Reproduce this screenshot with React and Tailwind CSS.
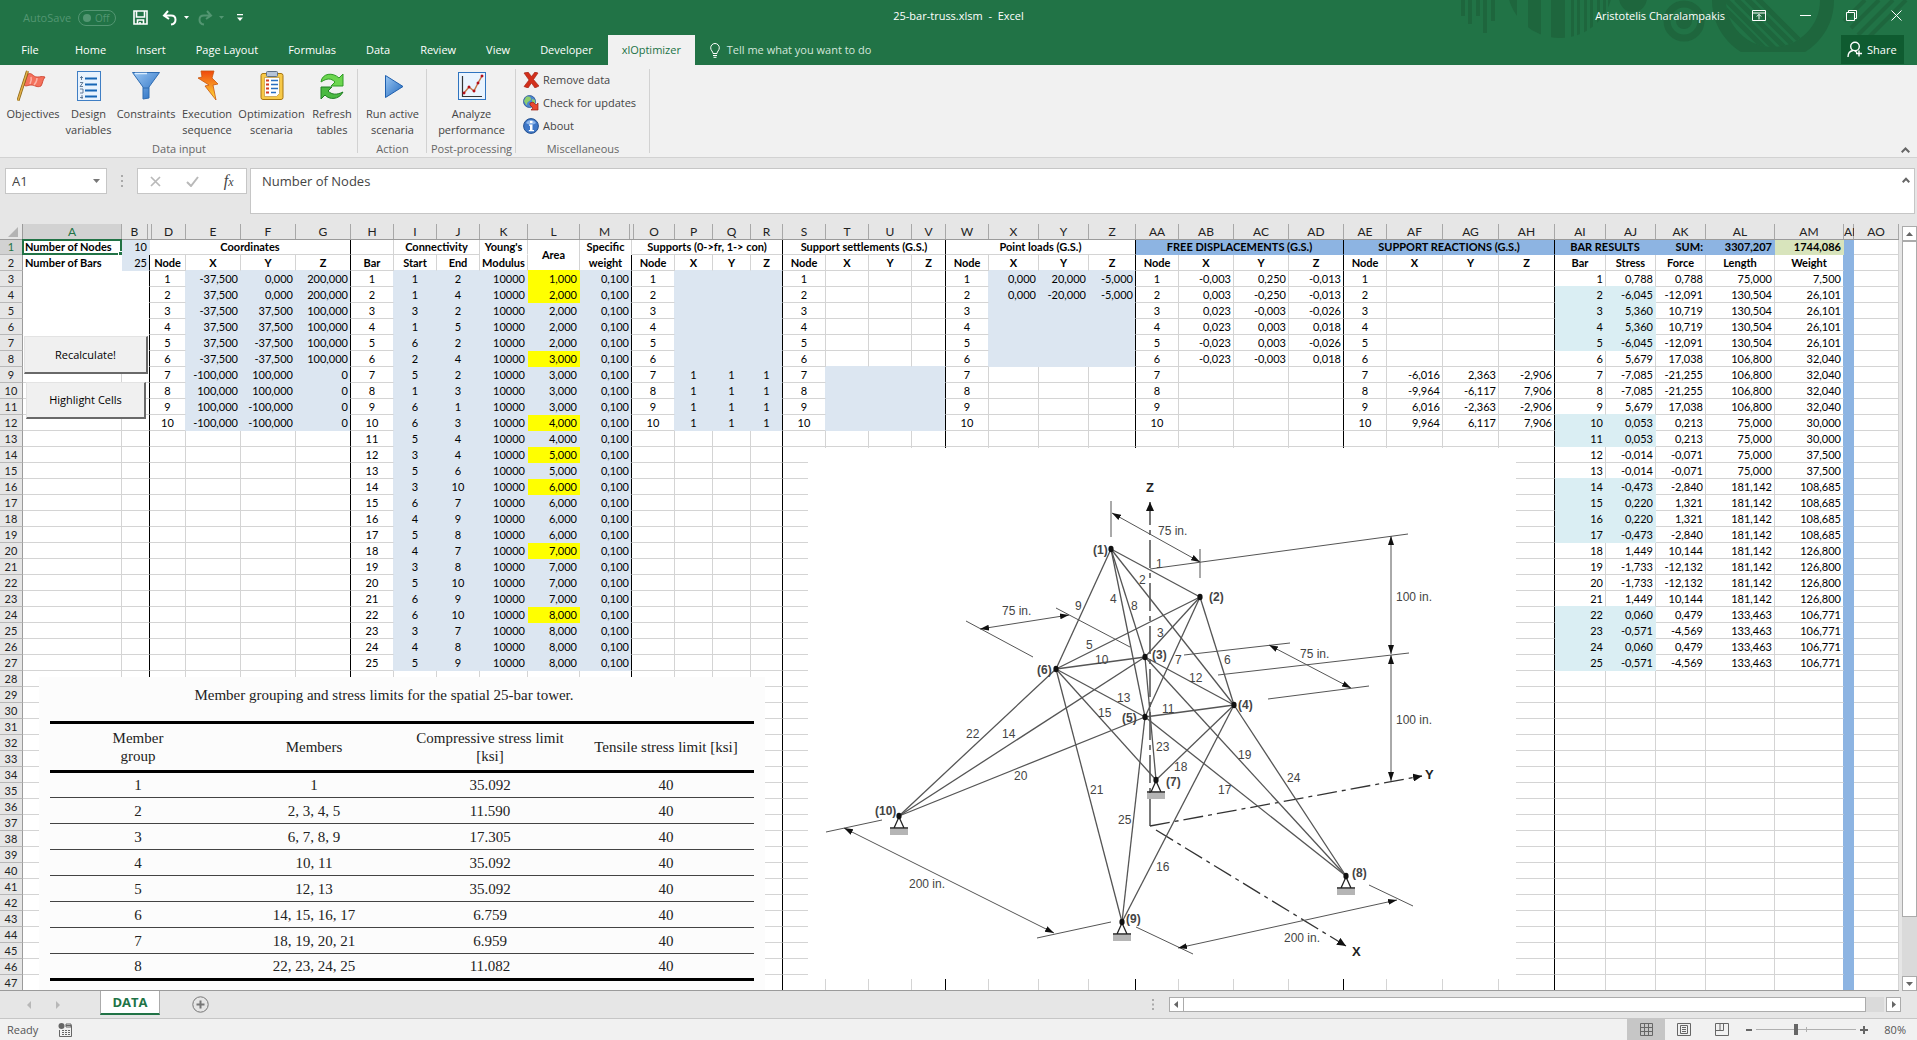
import React from 'react'

const COLS = [
    ['A', 99], ['B', 28], ['D', 36], ['E', 55], ['F', 55], ['G', 55],
    ['H', 43], ['I', 43], ['J', 43], ['K', 48], ['L', 52], ['M', 52],
    ['O', 43], ['P', 38], ['Q', 38], ['R', 32],
    ['S', 43], ['T', 43], ['U', 43], ['V', 34],
    ['W', 43], ['X', 50], ['Y', 50], ['Z', 47],
    ['AA', 43], ['AB', 55], ['AC', 55], ['AD', 55],
    ['AE', 43], ['AF', 56], ['AG', 56], ['AH', 56],
    ['AI', 51], ['AJ', 50], ['AK', 50], ['AL', 69], ['AM', 69], ['AN', 10], ['AO', null],
]
const NAMES = COLS.map((c) => c[0])
const THICK = ['B', 'G', 'M', 'R', 'V', 'Z', 'AD', 'AH']

const nodes = [
    ['-37,500', '0,000', '200,000'], ['37,500', '0,000', '200,000'], ['-37,500', '37,500', '100,000'],
    ['37,500', '37,500', '100,000'], ['37,500', '-37,500', '100,000'], ['-37,500', '-37,500', '100,000'],
    ['-100,000', '100,000', '0'], ['100,000', '100,000', '0'], ['100,000', '-100,000', '0'], ['-100,000', '-100,000', '0'],
]

const displacements = [
    ['-0,003', '0,250', '-0,013'], ['0,003', '-0,250', '-0,013'], ['0,023', '-0,003', '-0,026'],
    ['0,023', '0,003', '0,018'], ['-0,023', '0,003', '-0,026'], ['-0,023', '-0,003', '0,018'],
]

const reactions = [
    ['-6,016', '2,363', '-2,906'], ['-9,964', '-6,117', '7,906'], ['6,016', '-2,363', '-2,906'], ['9,964', '6,117', '7,906'],
]

const links = [
    [1, 2], [1, 4], [3, 2], [1, 5], [6, 2], [2, 4], [5, 2], [1, 3], [6, 1], [6, 3], [5, 4], [3, 4], [5, 6],
    [3, 10], [6, 7], [4, 9], [5, 8], [4, 7], [3, 8], [5, 10], [6, 9], [6, 10], [3, 7], [4, 8], [5, 9],
]

// area group of every bar, 1 to 8
const groups = [1, 2, 2, 2, 2, 3, 3, 3, 3, 4, 4, 5, 5, 6, 6, 6, 6, 7, 7, 7, 7, 8, 8, 8, 8]

const results = [
    ['0,788', '0,788', '75,000', '7,500'],
    ['-6,045', '-12,091', '130,504', '26,101'],
    ['5,360', '10,719', '130,504', '26,101'],
    ['5,360', '10,719', '130,504', '26,101'],
    ['-6,045', '-12,091', '130,504', '26,101'],
    ['5,679', '17,038', '106,800', '32,040'],
    ['-7,085', '-21,255', '106,800', '32,040'],
    ['-7,085', '-21,255', '106,800', '32,040'],
    ['5,679', '17,038', '106,800', '32,040'],
    ['0,053', '0,213', '75,000', '30,000'],
    ['0,053', '0,213', '75,000', '30,000'],
    ['-0,014', '-0,071', '75,000', '37,500'],
    ['-0,014', '-0,071', '75,000', '37,500'],
    ['-0,473', '-2,840', '181,142', '108,685'],
    ['0,220', '1,321', '181,142', '108,685'],
    ['0,220', '1,321', '181,142', '108,685'],
    ['-0,473', '-2,840', '181,142', '108,685'],
    ['1,449', '10,144', '181,142', '126,800'],
    ['-1,733', '-12,132', '181,142', '126,800'],
    ['-1,733', '-12,132', '181,142', '126,800'],
    ['1,449', '10,144', '181,142', '126,800'],
    ['0,060', '0,479', '133,463', '106,771'],
    ['-0,571', '-4,569', '133,463', '106,771'],
    ['0,060', '0,479', '133,463', '106,771'],
    ['-0,571', '-4,569', '133,463', '106,771'],
]

const cells = {}
const put = (col, row, value, align = 'right', bold = false, span = 1, rowSpan = 1) => {
    cells[col + row] = { value, align, bold, span, rowSpan }
}

put('A', 1, 'Number of Nodes', 'left', true)
put('A', 2, 'Number of Bars', 'left', true)
put('B', 1, '10')
put('B', 2, '25')
put('D', 1, 'Coordinates', 'center', true, 4)
put('I', 1, 'Connectivity', 'center', true, 2)
put('K', 1, "Young's", 'center', true)
put('L', 1, 'Area', 'center', true, 1, 2)
put('M', 1, 'Specific', 'center', true)
put('O', 1, 'Supports (0->fr, 1-> con)', 'center', true, 4)
put('S', 1, 'Support settlements (G.S.)', 'center', true, 4)
put('W', 1, 'Point loads (G.S.)', 'center', true, 4)
put('AA', 1, 'FREE DISPLACEMENTS (G.S.)', 'center', true, 4)
put('AE', 1, 'SUPPORT REACTIONS (G.S.)', 'center', true, 4)
put('AI', 1, 'BAR RESULTS', 'center', true, 2)
put('AK', 1, 'SUM:', 'right', true)
put('AL', 1, '3307,207', 'right', true)
put('AM', 1, '1744,086', 'right', true)

const heads = {
    D: 'Node', E: 'X', F: 'Y', G: 'Z', H: 'Bar', I: 'Start', J: 'End', K: 'Modulus', M: 'weight',
    O: 'Node', P: 'X', Q: 'Y', R: 'Z', S: 'Node', T: 'X', U: 'Y', V: 'Z', W: 'Node', X: 'X', Y: 'Y', Z: 'Z',
    AA: 'Node', AB: 'X', AC: 'Y', AD: 'Z', AE: 'Node', AF: 'X', AG: 'Y', AH: 'Z',
    AI: 'Bar', AJ: 'Stress', AK: 'Force', AL: 'Length', AM: 'Weight',
}
Object.keys(heads).forEach((col) => put(col, 2, heads[col], 'center', true))

const putRow = (names, row, values, align) => names.forEach((col, i) => put(col, row, values[i], align))

nodes.forEach((xyz, i) => {
    const row = i + 3
    putRow(['D', 'O', 'S', 'W', 'AA', 'AE'], row, Array(6).fill(i + 1), 'center')
    putRow(['E', 'F', 'G'], row, xyz)
    if (i >= 6) putRow(['P', 'Q', 'R'], row, [1, 1, 1], 'center')
})
putRow(['X', 'Y', 'Z'], 3, ['0,000', '20,000', '-5,000'])
putRow(['X', 'Y', 'Z'], 4, ['0,000', '-20,000', '-5,000'])
displacements.forEach((d, i) => putRow(['AB', 'AC', 'AD'], i + 3, d))
reactions.forEach((r, i) => putRow(['AF', 'AG', 'AH'], i + 9, r))
links.forEach((link, i) => {
    put('H', i + 3, i + 1, 'center')
    putRow(['I', 'J'], i + 3, link, 'center')
    putRow(['K', 'L', 'M'], i + 3, ['10000', `${groups[i]},000`, '0,100'])
    putRow(['AI', 'AJ', 'AK', 'AL', 'AM'], i + 3, [i + 1, ...results[i]])
})

const fillOf = (col, row) => {
    const idx = NAMES.indexOf(col)
    const within = (a, b) => idx >= NAMES.indexOf(a) && idx <= NAMES.indexOf(b)
    if (col === 'AN') return 'header'
    if (row === 1) {
        if (col === 'B') return 'input'
        if (col === 'AM') return 'green'
        return within('AA', 'AL') ? 'header' : null
    }
    if (row === 2) return col === 'B' ? 'input' : col === 'A' ? 'white' : null
    if (within('A', 'B')) return row <= 8 ? 'white' : null
    if (within('E', 'G') && row <= 12) return 'input'
    if (within('I', 'M') && row <= 27) {
        const first = row === 3 || groups[row - 3] !== groups[row - 4]
        return col === 'L' && first ? 'yellow' : 'input'
    }
    if (within('P', 'R') && row <= 12) return 'input'
    if (within('T', 'V') && row >= 9 && row <= 12) return 'input'
    if (within('X', 'Z') && row <= 8) return 'input'
    if (within('AI', 'AJ') && row <= 27 && groups[row - 3] % 2 === 0) return 'cyan'
    return null
}

const bg = {
    header: 'bg-[#8db4e2]', input: 'bg-[#dce6f1]', green: 'bg-[#d8e4bc]',
    yellow: 'bg-[#ffff00]', cyan: 'bg-[#daeef3]', white: 'bg-white',
}
const right = {
    header: 'border-r-[#8db4e2]', input: 'border-r-[#dce6f1]', green: 'border-r-[#d8e4bc]',
    yellow: 'border-r-[#ffff00]', cyan: 'border-r-[#daeef3]', white: 'border-r-white',
    grid: 'border-r-[#d4d4d4]', thick: 'border-r-black',
}
const bottom = {
    header: 'border-b-[#8db4e2]', input: 'border-b-[#dce6f1]', green: 'border-b-[#d8e4bc]',
    yellow: 'border-b-[#ffff00]', cyan: 'border-b-[#daeef3]', white: 'border-b-white',
    grid: 'border-b-[#d4d4d4]',
}
const aligns = { left: 'text-left', right: 'text-right', center: 'text-center' }

const Cell = ({ col, row }) => {
    const cell = cells[col + row] || { span: 1, rowSpan: 1, align: 'left' }
    const idx = NAMES.indexOf(col)
    const last = NAMES[idx + cell.span - 1]
    const next = NAMES[idx + cell.span]
    const fill = fillOf(col, row)
    const thick = THICK.includes(last) && !(row === 1 && (last === 'B' || last === 'M'))
    const rightKey = thick ? 'thick' : fill || (next && fillOf(next, row)) || 'grid'
    const noLine = row === 1 && (col === 'K' || col === 'M')
    const bottomKey = noLine ? 'white' : fill || fillOf(col, row + cell.rowSpan) || 'grid'
    const selected = col === 'A' && row === 1

    return (
        <td
            colSpan={cell.span}
            rowSpan={cell.rowSpan}
            className={`relative px-[2px] py-0 border-r border-b whitespace-nowrap
            ${aligns[cell.align]} ${cell.bold ? 'font-bold' : ''} ${fill ? bg[fill] : 'bg-white'} ${right[rightKey]} ${bottom[bottomKey]}`}
        >
            {cell.value}
            {selected && (
                <span className="absolute -inset-px border-2 border-[#217346]">
                    <span className="absolute -right-1 -bottom-1 size-[6px] border-t border-l border-white bg-[#217346]" />
                </span>
            )}
        </td>
    )
}

const Grid = () => {
    const rows = Array.from({ length: 47 }, (_, i) => i + 1)
    const renderRow = (row) => {
        const items = []
        for (let i = 0; i < NAMES.length; i++) {
            // the merged Area cell covers both heading rows
            if (row === 2 && NAMES[i] === 'L') continue
            items.push(<Cell key={NAMES[i]} col={NAMES[i]} row={row} />)
            const cell = cells[NAMES[i] + row]
            if (cell) i += cell.span - 1
        }
        return items
    }

    return (
        <table className="w-full table-fixed border-separate border-spacing-0 font-['Lato',sans-serif] text-[11px] leading-[14px] text-black">
            <colgroup>
                <col className="w-[23px]" />
                {COLS.map(([name, width]) => (
                    <col key={name} style={width ? { width } : undefined} />
                ))}
            </colgroup>
            <thead>
                <tr className="h-4 bg-[#e6e6e6]">
                    <th className="p-0 border-r border-b border-[#9b9b9b]">
                        <svg className="ml-auto mr-1" width="10" height="10" viewBox="0 0 10 10"><path d="M10 0v10H0z" fill="#b4b4b4" /></svg>
                    </th>
                    {NAMES.map((name) => (
                        <th
                            key={name}
                            scope="col"
                            className={`p-0 border-b font-normal text-[12px] whitespace-nowrap overflow-hidden
                            ${name === 'A' ? 'bg-[#d2d2d2] text-[#217346] border-b-[#217346]' : 'border-b-[#9b9b9b] text-[#222]'}`}
                        >
                            <div className={`h-[15px] leading-[15px] border-r border-[#a8a8a8]
                                ${name === 'B' || name === 'M' ? 'mr-[2px]' : ''} ${name === 'D' || name === 'O' ? 'border-l ml-px' : ''}`}>
                                {name}
                            </div>
                        </th>
                    ))}
                </tr>
            </thead>
            <tbody>
                {rows.map((row) => (
                    <tr key={row} className={row === 1 ? 'h-[15px]' : 'h-4'}>
                        <th
                            scope="row"
                            className={`p-0 border-r border-b border-r-[#9b9b9b] border-b-[#b8b8b8] font-normal text-center
                            ${row === 1 ? 'bg-[#d2d2d2] text-[#217346]' : 'bg-[#e6e6e6] text-[#222]'}`}
                        >
                            {row}
                        </th>
                        {renderRow(row)}
                    </tr>
                ))}
            </tbody>
        </table>
    )
}

const limits = [
    ['1', '1', '35.092', '40'], ['2', '2, 3, 4, 5', '11.590', '40'], ['3', '6, 7, 8, 9', '17.305', '40'],
    ['4', '10, 11', '35.092', '40'], ['5', '12, 13', '35.092', '40'], ['6', '14, 15, 16, 17', '6.759', '40'],
    ['7', '18, 19, 20, 21', '6.959', '40'], ['8', '22, 23, 24, 25', '11.082', '40'],
]

const LimitsTable = () => (
    <div className="absolute left-[39px] top-[453px] w-[726px] h-[320px] bg-[#fcfcfc] px-[11px] pt-2 font-['Liberation_Serif',serif] text-[15px] leading-[18px] text-[#222]">
        <table className="w-full table-fixed border-collapse text-center">
            <caption className="pr-9 pt-px pb-[17px]">Member grouping and stress limits for the spatial 25-bar tower.</caption>
            <thead>
                <tr className="h-[49px] border-y-[3px] border-black">
                    <th className="px-[56px] font-normal">Member group</th>
                    <th className="font-normal">Members</th>
                    <th className="font-normal">Compressive stress limit [ksi]</th>
                    <th className="font-normal whitespace-nowrap">Tensile stress limit [ksi]</th>
                </tr>
            </thead>
            <tbody>
                {limits.map((line) => (
                    <tr key={line[0]} className="h-[26px] border-b border-[#444] last:border-b-[3px] last:border-black">
                        {line.map((value, i) => <td key={i} className="p-0">{value}</td>)}
                    </tr>
                ))}
            </tbody>
        </table>
    </div>
)

const P = {
    1: [1111, 549], 2: [1200, 597], 3: [1145, 657], 4: [1234, 705], 5: [1145, 717],
    6: [1056, 669], 7: [1156, 780], 8: [1346, 876], 9: [1122, 922], 10: [899, 816],
}

const extensions = [
    [1111, 501, 1111, 537], [1200, 549, 1200, 578], [1150, 569, 1408, 534], [1218, 675, 1409, 653],
    [1184, 655, 1290, 643], [1268, 699, 1369, 686], [966, 621, 1033, 657], [1056, 608, 1130, 647],
    [826, 832, 882, 820], [1037, 938, 1111, 922], [1136, 927, 1193, 954], [1369, 885, 1413, 906],
]

const dimensions = [
    [1112, 513, 1200, 562], [1391, 536, 1391, 654], [1391, 655, 1391, 781], [1269, 645, 1351, 688],
    [980, 629, 1069, 615], [844, 828, 1054, 933], [1178, 948, 1397, 900],
]

const barLabels = [
    [1156, 568, '1'], [1139, 584, '2'], [1157, 637, '3'], [1110, 603, '4'], [1086, 649, '5'], [1224, 664, '6'],
    [1175, 664, '7'], [1131, 610, '8'], [1075, 610, '9'], [1095, 664, '10'], [1162, 713, '11'], [1189, 682, '12'],
    [1117, 702, '13'], [1002, 738, '14'], [1098, 717, '15'], [1156, 871, '16'], [1218, 794, '17'], [1174, 771, '18'],
    [1238, 759, '19'], [1014, 780, '20'], [1090, 794, '21'], [966, 738, '22'], [1156, 751, '23'], [1287, 782, '24'],
    [1118, 824, '25'], [1158, 535, '75 in.'], [1002, 615, '75 in.'], [1300, 658, '75 in.'], [1396, 601, '100 in.'],
    [1396, 724, '100 in.'], [909, 888, '200 in.'], [1284, 942, '200 in.'],
]

const nodeLabels = [
    [1093, 554, '(1)'], [1209, 601, '(2)'], [1152, 659, '(3)'], [1238, 709, '(4)'], [1122, 722, '(5)'],
    [1037, 674, '(6)'], [1166, 786, '(7)'], [1352, 877, '(8)'], [1126, 923, '(9)'], [875, 815, '(10)'],
]

const TrussDrawing = () => (
    <svg
        className="absolute left-[808px] top-[224px] bg-white font-['Liberation_Sans',sans-serif]"
        width="708" height="531" viewBox="808 448 708 531" fill="none" stroke="#555" role="img" aria-label="25-bar truss"
    >
        <defs>
            <marker id="tip" markerUnits="userSpaceOnUse" markerWidth="10" markerHeight="8" refX="9" refY="4" orient="auto-start-reverse">
                <path d="M0 1 9 4 0 7z" fill="#111" stroke="none" />
            </marker>
            <marker id="axis" markerUnits="userSpaceOnUse" markerWidth="10" markerHeight="8" refX="9" refY="4" orient="auto">
                <path d="M0 0 9 4 0 8z" fill="#111" stroke="none" />
            </marker>
        </defs>
        <g stroke="#333" strokeWidth="1.3">
            <path d="M1150 826V502" strokeDasharray="28 5 5 5" markerEnd="url(#axis)" />
            <path d="M1150 826 1422 776" strokeDasharray="20 5 4 5" markerEnd="url(#axis)" />
            <path d="M1156 830 1346 946" strokeDasharray="20 5 4 5" markerEnd="url(#axis)" />
        </g>
        {links.map(([a, b], i) => (
            <line key={i} x1={P[a][0]} y1={P[a][1]} x2={P[b][0]} y2={P[b][1]} strokeWidth="1.3" />
        ))}
        {extensions.map(([x1, y1, x2, y2], i) => <line key={i} x1={x1} y1={y1} x2={x2} y2={y2} />)}
        {dimensions.map(([x1, y1, x2, y2], i) => (
            <line key={i} x1={x1} y1={y1} x2={x2} y2={y2} markerStart="url(#tip)" markerEnd="url(#tip)" />
        ))}
        {[7, 8, 9, 10].map((n) => (
            <g key={n}>
                <rect x={P[n][0] - 9} y={P[n][1] + 13} width="18" height="6" fill="#b5b5b5" stroke="none" />
                <path d={`M${P[n][0] - 5} ${P[n][1] + 12}l5 -11 5 11M${P[n][0] - 9} ${P[n][1] + 12}h18`} stroke="#222" strokeWidth="1.3" />
            </g>
        ))}
        {Object.keys(P).map((n) => <ellipse key={n} cx={P[n][0]} cy={P[n][1]} rx="2.600" ry="3.200" fill="#111" stroke="none" />)}
        <g fill="#444" stroke="none" fontSize="12">
            {barLabels.map(([x, y, text]) => <text key={x + text + y} x={x} y={y}>{text}</text>)}
            <g fontWeight="bold">
                {nodeLabels.map(([x, y, text]) => <text key={text} x={x} y={y}>{text}</text>)}
                <text x="1146" y="492" fontSize="13" fill="#222">Z</text>
                <text x="1425" y="779" fontSize="13" fill="#222">Y</text>
                <text x="1352" y="956" fontSize="13" fill="#222">X</text>
            </g>
        </g>
    </svg>
)

const icons = {
    flag: (
        <>
            <path d="M11 4c4-2 5 3 9 3s4-1 8 0c-3 4-2 6-4 9-4 2-6-1-10-1-3 0-5 2-7 0z" fill="#f4715c" stroke="#c93a25" strokeWidth=".8" />
            <path d="M14 7c1 3 0 5-1 7M20 8c0 3-1 5-3 7" stroke="#fbb3a6" fill="none" strokeWidth="1.5" />
            <path d="M10.500 1 1 30.500" stroke="#8a6413" strokeWidth="3" />
            <path d="M10.500 1 1 30.500" stroke="#e2b04a" strokeWidth="1.500" />
        </>
    ),
    list: (
        <>
            <rect x="4.500" y="1.500" width="23" height="29" fill="#e9f3fd" stroke="#3f7ec4" />
            <path d="M12 8.500h12M12 14.500h12M12 20.500h12M12 26.500h12" stroke="#1766b5" strokeWidth="2" />
            <path d="M7 7.500h3M8.500 6v4M7 12.500h3l-3 4h3M7 19h3v4H7M9 25v4M7 27.500h3" stroke="#56708f" strokeWidth=".9" fill="none" />
        </>
    ),
    funnel: (
        <>
            <path d="M2.500 2.500h27L19 17v11l-6 1V17z" fill="url(#blue)" stroke="#2f6cb2" />
            <path d="M13 18h6" stroke="#2f6cb2" />
            <path d="M5 3.500h12" stroke="#d9ecff" strokeWidth="1.500" />
        </>
    ),
    bolt: <path d="M10 1h13l-2 7 6 6-5 1 3 15L14 16l4-1L7 8l4-1z" fill="url(#fire)" stroke="#c8560d" strokeWidth=".8" />,
    clipboard: (
        <>
            <rect x="5" y="3.500" width="22" height="26" rx="2" fill="#f7c948" stroke="#a8760f" />
            <path d="M8.500 7.500h15v16l-3 3h-12z" fill="#fff" stroke="#b58a2e" strokeWidth=".6" />
            <rect x="10.500" y="1.500" width="11" height="5" rx="1" fill="#b6c4d8" stroke="#5f7085" />
            <path d="M10 10.500h3M10 14.500h3M10 18.500h3M10 22.500h3" stroke="#d63a22" strokeWidth="2.200" />
            <path d="M15 10.500h7M15 14.500h7M15 18.500h7M15 22.500h5" stroke="#2a6fc0" strokeWidth="1.500" />
        </>
    ),
    refresh: (
        <>
            <path d="M5 12C6 3 17 2 23 8l4-4v12H15l4-4c-4-4-8-4-14 0z" fill="#6cd64f" stroke="#2f9a26" />
            <path d="M27 22c-4 8-14 8-18 3l-4 4V17h11l-4 4c4 4 9 4 15 1z" fill="#4ab942" stroke="#1f7f22" />
        </>
    ),
    play: <path d="M8.500 5.500 26 16.500 8.500 27.500z" fill="url(#blue)" stroke="#1e5fae" />,
    chart: (
        <>
            <rect x="2.500" y="2.500" width="27" height="27" fill="#eaf4fe" stroke="#2f74c0" />
            <path d="M6.500 6v20.500H26" stroke="#333" strokeWidth="1.200" fill="none" />
            <path d="m8 23 5-6 5 4 4-8 4-7" stroke="#c5774b" strokeWidth="1.500" fill="none" />
            <path d="M7 22h2v2H7zM12 16h2v2h-2zM17 20h2v2h-2zM21 12h2v2h-2zM25 5h2v2h-2z" fill="#b5121b" stroke="#b5121b" strokeWidth=".6" />
        </>
    ),
    cross: <path d="m1 1 4-1 3.500 4.500L12 0l3 1-4.500 6.500L16 14l-4 2-3.500-5L5 16l-4-1.500L6 8z" fill="#d3301c" stroke="#9c1b0d" strokeWidth=".6" />,
    globe: (
        <>
            <circle cx="6.500" cy="6.500" r="6" fill="#4d86cf" stroke="#264f8f" strokeWidth=".8" />
            <path d="M3 2c3-1 5 0 5 2S4 6 4 9 2 8 1 6zM9 4l3 1v4l-3 1z" fill="#8fce6d" />
            <path d="m7 8 3-1 3 3 2-2v7H8l2-2-3-3z" fill="#e8482f" stroke="#9c1b0d" strokeWidth=".7" />
        </>
    ),
    info: (
        <>
            <circle cx="8" cy="8" r="7.400" fill="#3f78c8" stroke="#24508f" />
            <path d="M3 5c2-4 8-4 10 0-3 2-7 2-10 0z" fill="#8fb7ea" />
            <path d="M7 3h2.500v2H7zM6 6.500h3.500V12H11v1.200H5.800V12H7V7.700H6z" fill="#fff" />
        </>
    ),
}

const BigButton = ({ icon, lines, width }) => (
    <button className={`flex flex-col items-center gap-1 leading-4 text-center ${width}`}>
        <svg width="32" height="32" viewBox="0 0 32 32" fill="none">{icons[icon]}</svg>
        <span className="flex flex-col whitespace-nowrap">
            {lines.map((line) => <span key={line}>{line}</span>)}
        </span>
    </button>
)

const SmallButton = ({ icon, text }) => (
    <button className="flex items-center gap-1 h-[23px]">
        <svg width="16" height="16" viewBox="0 0 16 16">{icons[icon]}</svg>
        {text}
    </button>
)

const Group = ({ label, className, children }) => (
    <section className={`relative flex flex-col h-[92px] pt-[5px] ${className}`}>
        <div className="flex grow">{children}</div>
        <div className="h-4 leading-4 text-center whitespace-nowrap text-[#666]">{label}</div>
        <span className="absolute right-0 top-1 bottom-1 w-px bg-[#d2d2d2]" />
    </section>
)

const TitleBar = () => (
    <header className="relative flex items-center h-[35px] text-white">
        <svg className="absolute right-0 top-0" width="517" height="65" viewBox="0 0 517 65" fill="#1e663d">
            <defs>
                <clipPath id="dome"><circle cx="160" cy="-15" r="53" /></clipPath>
                <clipPath id="lens"><circle cx="373" cy="0" r="47" /></clipPath>
                <clipPath id="base"><path d="M0 0h517v52H0z" /></clipPath>
            </defs>
            <path d="M61 0h4v16h-4zM68 0h4v24h-4zM76 0h4v16h-4zM83 0h4v33h-4zM91 0h4v21h-4z" />
            <g clipPath="url(#dome)">
                <path d="M107 0h10v40h-10zM128 0h13v40h-13zM151 0h14v40h-14zM171 0h3v40h-3zM177 0h3v40h-3zM184 0h3v40h-3zM190 0h3v40h-3zM197 0h3v40h-3zM203 0h3v40h-3zM208 0h3v40h-3z" />
            </g>
            <circle cx="233" cy="-2" r="14" />
            <circle cx="284" cy="21" r="17" fill="none" stroke="#1e663d" strokeWidth="7" />
            <circle cx="284" cy="21" r="8" />
            <g clipPath="url(#base)"><circle cx="373" cy="0" r="54" fill="none" stroke="#1e663d" strokeWidth="14" /></g>
            <g clipPath="url(#lens)" stroke="#1e663d" strokeWidth="5">
                <path d="m316 0 60 60M326 0l60 60M336-1l60 60M346-2l60 60M356-3l60 60" />
            </g>
            <path d="M444 21 465 0M451 28l28-28M458 35l35-35M466 40l40-40" stroke="#1e663d" strokeWidth="4" />
        </svg>
        <div className="relative flex flex-1 items-center pl-[15px]">
            <label className="flex items-center gap-[7px] ml-2 text-[#539672]">
                AutoSave
                <span className="flex items-center gap-1 w-[38px] h-4 pl-1 border border-[#539672] rounded-full text-[10px]">
                    <input type="checkbox" className="appearance-none size-2 rounded-full bg-[#539672]" />
                    Off
                </span>
            </label>
            <button aria-label="Save" className="ml-[17px]">
                <svg width="15" height="15" viewBox="0 0 15 15" fill="none" stroke="#fff" strokeWidth="1.600"><path d="M1 1h13v13H1zM3.500 1v6h8V1M4.500 14v-4h6v4M7 12v2" /></svg>
            </button>
            <button aria-label="Undo" className="flex items-center gap-[6px] ml-[14px]">
                <svg width="16" height="16" viewBox="0 0 16 16" fill="none" stroke="#fff" strokeWidth="2"><path d="M6 1 2 5.500 7 9M2 5.500h7c6 0 6 8 0 9" /></svg>
                <svg width="5" height="3" viewBox="0 0 5 3" fill="#fff"><path d="M0 0h5L2.500 3z" /></svg>
            </button>
            <button aria-label="Redo" className="flex items-center gap-[6px] ml-2">
                <svg width="16" height="16" viewBox="0 0 16 16" fill="none" stroke="#539672" strokeWidth="2"><path d="m10 1 4 4.500L9 9M14 5.500H7c-6 0-6 8 0 9" /></svg>
                <svg width="5" height="3" viewBox="0 0 5 3" fill="#539672"><path d="M0 0h5L2.500 3z" /></svg>
            </button>
            <button aria-label="Customize Quick Access Toolbar" className="ml-[13px]">
                <svg width="6" height="7" viewBox="0 0 6 7" fill="#fff"><path d="M0 0h6v1.300H0zM0 3.500h6L3 7z" /></svg>
            </button>
        </div>
        <h1 className="relative whitespace-pre pb-[3px]">25-bar-truss.xlsm  -  Excel</h1>
        <div className="relative flex flex-1 items-center justify-end pr-[15px] pb-1">
            <span className="mr-[27px]">Aristotelis Charalampakis</span>
            <button aria-label="Ribbon Display Options" className="mr-[34px]">
                <svg width="14" height="12" viewBox="0 0 14 12" fill="none" stroke="#fff"><path d="M.5.5h13v10H.5zM.5 3h13M7 9.500V4.500M4.800 6.500 7 4.300l2.200 2.200" /></svg>
            </button>
            <button aria-label="Minimize" className="mr-[35px]">
                <svg width="11" height="11" viewBox="0 0 11 11" stroke="#fff"><path d="M0 5.500h11" /></svg>
            </button>
            <button aria-label="Restore" className="mr-[34px]">
                <svg width="11" height="11" viewBox="0 0 11 11" fill="none" stroke="#fff"><path d="M.5 2.500h8v8h-8zM2.500 2.500v-2h8v8h-2" /></svg>
            </button>
            <button aria-label="Close">
                <svg width="11" height="11" viewBox="0 0 11 11" stroke="#fff"><path d="m.5.5 10 10M10.500.5l-10 10" /></svg>
            </button>
        </div>
    </header>
)

const tabs = ['Home', 'Insert', 'Page Layout', 'Formulas', 'Data', 'Review', 'View', 'Developer']

const Tabs = () => (
    <nav className="relative flex h-[30px] text-white">
        <button className="w-[60px]">File</button>
        {tabs.map((tab) => <button key={tab} className="px-[15px] whitespace-nowrap">{tab}</button>)}
        <button className="w-[87px] bg-[#f1f1f1] text-[#217346]">xlOptimizer</button>
        <button className="flex items-center gap-[7px] ml-[15px] text-[#d3e6db]">
            <svg width="10" height="15" viewBox="0 0 10 15" fill="none" stroke="#fff"><path d="M3 10.500C3 8.500.7 7.500.7 4.800a4.300 4.300 0 0 1 8.600 0C9.300 7.500 7 8.500 7 10.500zM3 12.500h4M3.500 14.300h3" /></svg>
            Tell me what you want to do
        </button>
        <button className="flex items-center gap-1 w-[63px] h-[29px] ml-auto mr-[13px] pl-[6px] bg-[#0f5b30]">
            <svg width="16" height="17" viewBox="0 0 16 17" fill="none" stroke="#fff" strokeWidth="1.400"><circle cx="8" cy="5.500" r="4.300" /><path d="M1 16c0-4 2-6 5-6.500M8 10l2 1.500M12 9.500v6M9 12.500h6" /></svg>
            Share
        </button>
    </nav>
)

const Ribbon = () => (
    <div className="relative flex bg-[#f1f1f1] border-b border-[#d2d2d2] text-[#444]">
        <svg width="0" height="0" className="absolute">
            <defs>
                <linearGradient id="blue" x2="1" y2="1"><stop stopColor="#9cc8f4" /><stop offset="1" stopColor="#1f67bd" /></linearGradient>
                <linearGradient id="fire" x2="0" y2="1"><stop stopColor="#f0480c" /><stop offset="1" stopColor="#ffdf3a" /></linearGradient>
            </defs>
        </svg>
        <Group label="Data input" className="pl-[2px] pr-[2px]">
            <BigButton icon="flag" width="w-[62px]" lines={['Objectives']} />
            <BigButton icon="list" width="w-[49px]" lines={['Design', 'variables']} />
            <BigButton icon="funnel" width="w-[66px]" lines={['Constraints']} />
            <BigButton icon="bolt" width="w-[56px]" lines={['Execution', 'sequence']} />
            <BigButton icon="clipboard" width="w-[73px]" lines={['Optimization', 'scenaria']} />
            <BigButton icon="refresh" width="w-[48px]" lines={['Refresh', 'tables']} />
        </Group>
        <Group label="Action" className="w-[69px]">
            <BigButton icon="play" width="w-full" lines={['Run active', 'scenaria']} />
        </Group>
        <Group label="Post-processing" className="w-[89px]">
            <BigButton icon="chart" width="w-full" lines={['Analyze', 'performance']} />
        </Group>
        <Group label="Miscellaneous" className="w-[134px]">
            <div className="flex flex-col pl-[7px] -mt-[2px]">
                <SmallButton icon="cross" text="Remove data" />
                <SmallButton icon="globe" text="Check for updates" />
                <SmallButton icon="info" text="About" />
            </div>
        </Group>
        <button aria-label="Collapse the Ribbon" className="self-end ml-auto mr-[7px] mb-[4px]">
            <svg width="9" height="6" viewBox="0 0 9 6" fill="none" stroke="#666" strokeWidth="2"><path d="M.7 5.300 4.500 1.500l3.800 3.800" /></svg>
        </button>
    </div>
)

const FormulaBar = () => (
    <div className="flex items-start h-[66px] pt-[10px] pl-[5px] pr-[2px] text-[#444]">
        <div className="flex items-center w-[102px] h-[26px] bg-white border border-[#c6c6c6]">
            <input aria-label="Name Box" defaultValue="A1" className="w-full min-w-0 pl-[6px] text-[13px] outline-none" />
            <button aria-label="Names" className="px-[6px]">
                <svg width="7" height="4" viewBox="0 0 7 4" fill="#777"><path d="M0 0h7L3.500 4z" /></svg>
            </button>
        </div>
        <svg className="mx-[14px] mt-[7px]" width="2" height="12" viewBox="0 0 2 12" fill="#aaa"><path d="M0 0h2v2H0zM0 5h2v2H0zM0 10h2v2H0z" /></svg>
        <div className="flex items-center justify-around w-[110px] h-[26px] bg-white border border-[#c6c6c6]">
            <button aria-label="Cancel">
                <svg width="11" height="11" viewBox="0 0 11 11" stroke="#b9b9b9" strokeWidth="1.700"><path d="m1 1 9 9M10 1l-9 9" /></svg>
            </button>
            <button aria-label="Enter">
                <svg width="13" height="11" viewBox="0 0 13 11" fill="none" stroke="#b9b9b9" strokeWidth="2"><path d="m1 6 4 4 7-9" /></svg>
            </button>
            <button aria-label="Insert Function" className="font-['Liberation_Serif',serif] italic text-[16px] leading-4 text-[#444]">
                f<span className="text-[12px]">x</span>
            </button>
        </div>
        <div className="flex grow h-[46px] ml-[3px] bg-white border border-[#c6c6c6]">
            <textarea aria-label="Formula Bar" defaultValue="Number of Nodes" className="grow pl-[11px] pt-[3px] text-[13px] leading-[18px] resize-none outline-none" />
            <button aria-label="Collapse Formula Bar" className="self-start mt-2 mr-1">
                <svg width="8" height="6" viewBox="0 0 8 6" fill="none" stroke="#666" strokeWidth="2"><path d="M.7 5.200 4 1.700l3.300 3.500" /></svg>
            </button>
        </div>
    </div>
)

const sheetButton = 'absolute bg-[#f0f0f0] border-t border-l border-t-[#e3e3e3] border-l-[#e3e3e3] border-r-2 border-b-2 border-r-[#696969] border-b-[#696969] text-black text-[11px]'
const scrollButton = 'flex items-center justify-center shrink-0 bg-white border border-[#ababab]'

const Sheet = () => (
    <main className="flex flex-1 min-h-0">
        <div className="relative flex-1 min-w-0 overflow-hidden border-b border-[#9b9b9b]">
            <Grid />
            <button className={`${sheetButton} left-[24px] top-[112px] w-[124px] h-[38px]`}>Recalculate!</button>
            <button className={`${sheetButton} left-[26px] top-[158px] w-[120px] h-[37px]`}>Highlight Cells</button>
            <LimitsTable />
            <TrussDrawing />
        </div>
        <div className="flex flex-col w-[18px] pl-[3px] pt-[2px]">
            <button aria-label="Scroll up" className={`${scrollButton} h-[15px]`}>
                <svg width="7" height="4" viewBox="0 0 7 4" fill="#666"><path d="M0 4h7L3.500 0z" /></svg>
            </button>
            <div className="grow bg-[#dadada]">
                <div className="h-[92%] bg-white border border-[#ababab]" />
            </div>
            <button aria-label="Scroll down" className={`${scrollButton} h-[15px]`}>
                <svg width="7" height="4" viewBox="0 0 7 4" fill="#666"><path d="M0 0h7L3.500 4z" /></svg>
            </button>
        </div>
    </main>
)

const SheetTabs = () => (
    <div className="flex h-[27px]">
        <button aria-label="Previous sheet" className="ml-[27px]">
            <svg width="4" height="8" viewBox="0 0 4 8" fill="#b8b8b8"><path d="M4 0v8L0 4z" /></svg>
        </button>
        <button aria-label="Next sheet" className="ml-[25px]">
            <svg width="4" height="8" viewBox="0 0 4 8" fill="#b8b8b8"><path d="M0 0v8l4-4z" /></svg>
        </button>
        <button className="w-[60px] h-[25px] -mt-px ml-10 bg-white border-x border-[#ababab] border-b-2 border-b-[#217346] font-bold text-[13px] leading-5 text-[#217346]">DATA</button>
        <button aria-label="New sheet" className="ml-8">
            <svg width="17" height="17" viewBox="0 0 17 17" fill="none" stroke="#777"><circle cx="8.500" cy="8.500" r="7.700" /><path d="M8.500 4.500v8M4.500 8.500h8" strokeWidth="2" /></svg>
        </button>
        <svg className="ml-auto mr-[15px] mt-[8px]" width="2" height="11" viewBox="0 0 2 11" fill="#aaa"><path d="M0 0h2v2H0zM0 4.500h2v2H0zM0 9h2v2H0z" /></svg>
        <div className="flex w-[38.2%] h-[15px] mt-[6px] mr-4">
            <button aria-label="Scroll left" className={`${scrollButton} w-[15px]`}>
                <svg width="4" height="7" viewBox="0 0 4 7" fill="#666"><path d="M4 0v7L0 3.500z" /></svg>
            </button>
            <div className="grow mr-[2px] bg-[#dadada]">
                <div className="w-[97.5%] h-full bg-white border border-l-0 border-[#ababab]" />
            </div>
            <button aria-label="Scroll right" className={`${scrollButton} w-[15px]`}>
                <svg width="4" height="7" viewBox="0 0 4 7" fill="#666"><path d="M0 0v7l4-3.500z" /></svg>
            </button>
        </div>
    </div>
)

const StatusBar = () => (
    <footer className="flex items-center h-[22px] pl-[7px] pr-[11px] bg-[#f1f1f1] border-t border-[#c6c6c6] text-[#555]">
        Ready
        <button aria-label="Record Macro" className="ml-5">
            <svg width="14" height="14" viewBox="0 0 14 14" fill="none" stroke="#666"><circle cx="3.500" cy="3" r="3" fill="#666" stroke="none" /><path d="M8 2.500h5.500v11h-12V7M8 1v3h5V1z" /><path d="M4 7.500h8M4 9.500h8M4 11.500h8" strokeDasharray="2 1" /></svg>
        </button>
        <button aria-label="Normal" className="flex items-center justify-center w-[38px] h-full ml-auto bg-[#c6c6c6]">
            <svg width="13" height="13" viewBox="0 0 13 13" fill="none" stroke="#666"><path d="M.5.5h12v12H.5zM4.500 0v13M8.500 0v13M0 4.500h13M0 8.500h13" /></svg>
        </button>
        <button aria-label="Page Layout" className="flex justify-center w-[38px]">
            <svg width="14" height="13" viewBox="0 0 14 13" fill="none" stroke="#666"><path d="M.5.5h13v12H.5zM3.500 2.500h7v8h-7zM5 4.500h4M5 6.500h4M5 8.500h4" /></svg>
        </button>
        <button aria-label="Page Break Preview" className="flex justify-center w-[38px]">
            <svg width="14" height="13" viewBox="0 0 14 13" fill="none" stroke="#666"><path d="M.5.5h13v12H.5zM.5 7.500h8V.5M5 .5v7" /></svg>
        </button>
        <button aria-label="Zoom Out" className="w-[6px] h-[2px] ml-[5px] bg-[#666]" />
        <span className="relative flex items-center w-[100px] ml-1">
            <span className="absolute left-0 right-0 h-px bg-[#b0b0b0]" />
            <span className="absolute left-1/2 w-px h-[5px] bg-[#b0b0b0]" />
            <input
                type="range" min="0" max="100" defaultValue="40" aria-label="Zoom"
                className="relative w-full h-3 appearance-none bg-transparent [&::-webkit-slider-thumb]:appearance-none [&::-webkit-slider-thumb]:w-1 [&::-webkit-slider-thumb]:h-[11px] [&::-webkit-slider-thumb]:bg-[#666]"
            />
        </span>
        <button aria-label="Zoom In" className="ml-1">
            <svg width="8" height="8" viewBox="0 0 8 8" stroke="#666" strokeWidth="2"><path d="M4 0v8M0 4h8" /></svg>
        </button>
        <span className="w-[38px] text-right">80%</span>
    </footer>
)

const App = () => {
    return (
        <div className="flex flex-col h-screen overflow-hidden bg-[#e6e6e6] font-['Open_Sans','Noto_Sans',sans-serif] text-[11px] leading-4">
            <div className="relative bg-[#217346]">
                <TitleBar />
                <Tabs />
            </div>
            <Ribbon />
            <FormulaBar />
            <Sheet />
            <SheetTabs />
            <StatusBar />
        </div>
    )
}

export default App
